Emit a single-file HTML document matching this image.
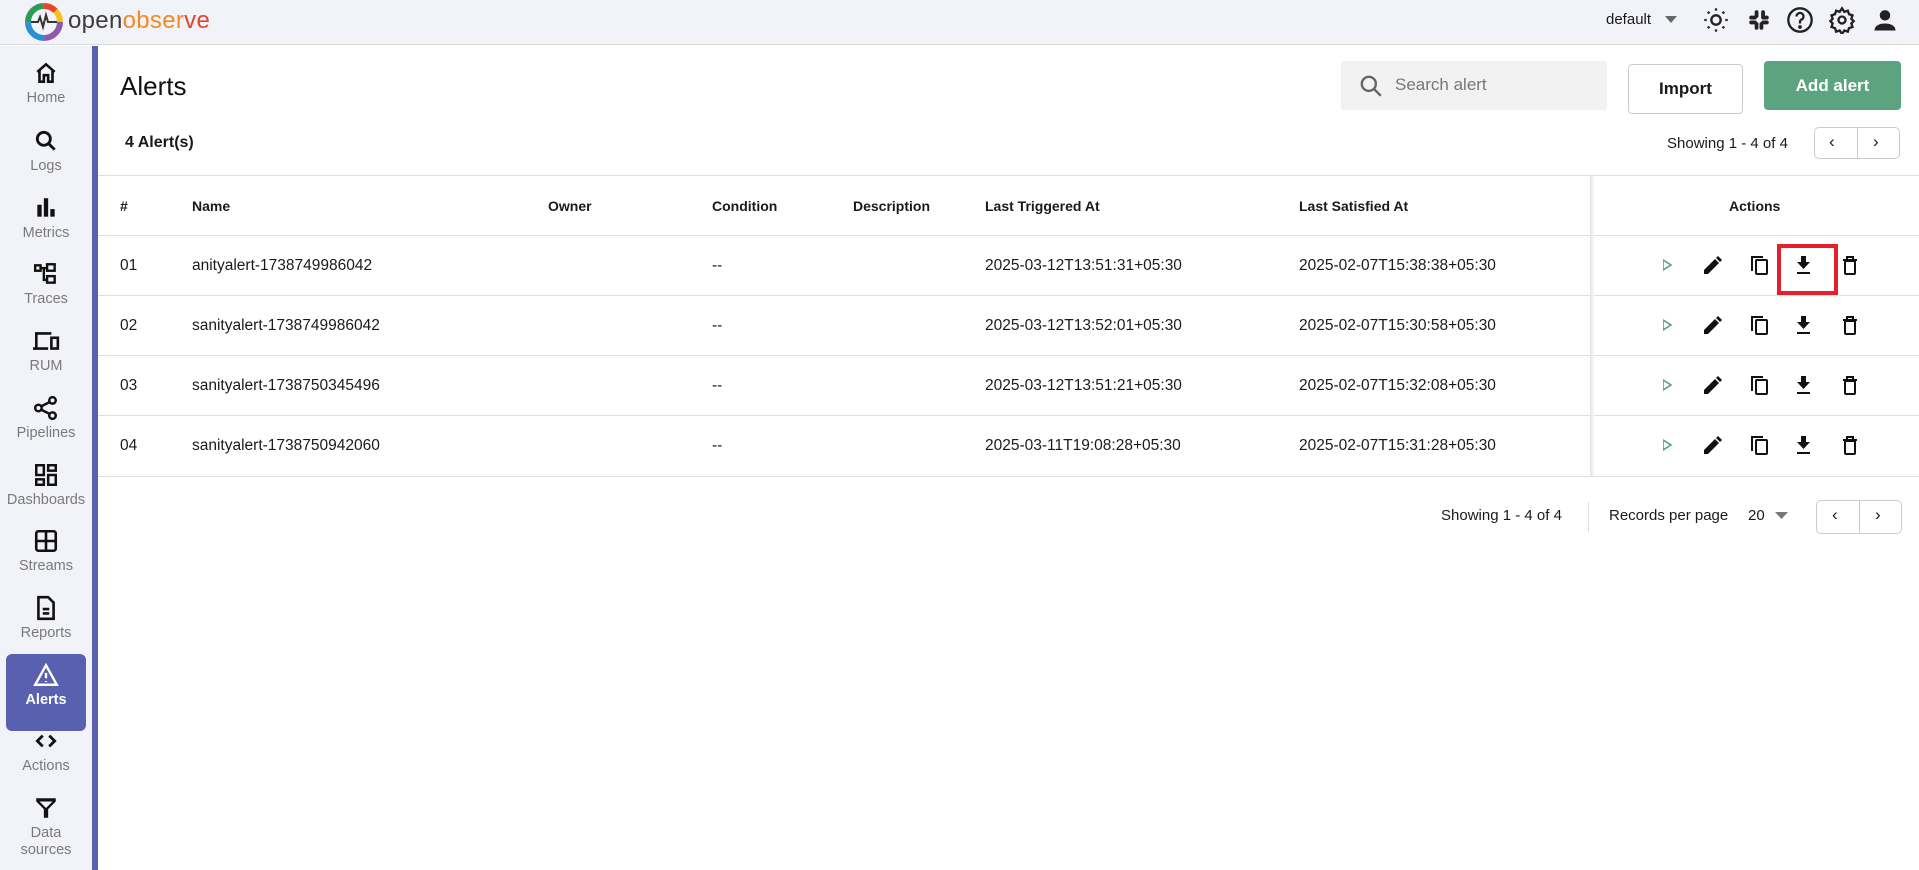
<!DOCTYPE html>
<html><head><meta charset="utf-8"><style>
*{box-sizing:border-box;margin:0;padding:0}
body{width:1919px;height:870px;overflow:hidden;background:#fff;font-family:"Liberation Sans",sans-serif;color:#1a1a1a;position:relative}
.abs{position:absolute}
#hdr{left:0;top:0;width:1919px;height:45px;background:#f2f3f8;border-bottom:1px solid #dcdcdc}
#side{left:0;top:46px;width:92px;height:824px;background:#f2f3f8}
#bar{left:92px;top:46px;width:6px;height:824px;background:#5960b0}
.nav{position:absolute;left:0;width:92px;text-align:center;color:#7a7a7a;font-size:14.5px}
.nav svg{display:block;margin:0 auto}
.nav div{margin-top:4px!important}
.act{left:6px;top:654px;width:80px;height:77px;background:#5960b0;border-radius:6px}
.th{position:absolute;top:198px;font-size:14px;font-weight:bold}
.td{position:absolute;font-size:15.5px}
.hl{position:absolute;left:98px;width:1821px;height:1px;background:#e0e0e0}
</style></head><body>
<div id="hdr" class="abs"></div>
<svg class="abs" style="left:24px;top:2px" width="40" height="40" viewBox="0 0 40 40">
<circle cx="20" cy="20" r="16" fill="none" stroke="#8e5aa8" stroke-width="6" stroke-dasharray="25 76" stroke-dashoffset="0"/>
<circle cx="20" cy="20" r="16" fill="none" stroke="#2b8fd6" stroke-width="6" stroke-dasharray="25 76" stroke-dashoffset="-25"/>
<circle cx="20" cy="20" r="16" fill="none" stroke="#2c9b58" stroke-width="6" stroke-dasharray="25 76" stroke-dashoffset="-50"/>
<circle cx="20" cy="20" r="16" fill="none" stroke="#e8442a" stroke-width="6" stroke-dasharray="13 88" stroke-dashoffset="-75"/>
<circle cx="20" cy="20" r="16" fill="none" stroke="#f4c21c" stroke-width="6" stroke-dasharray="13 88" stroke-dashoffset="-88"/>
<path d="M7 20h7l2-5 3 10 3-12 2 7h9" fill="none" stroke="#333" stroke-width="2"/>
</svg>
<div class="abs" style="left:68px;top:7px;font-size:24px;letter-spacing:0.3px"><span style="color:#3b3b3b">open</span><span style="color:#f08a24">obser</span><span style="color:#e5432b">ve</span></div>
<div class="abs" style="left:1606px;top:11px;font-size:15px">default</div>
<svg class="abs" style="left:1665px;top:16px" width="12" height="8"><path d="M0 0h12L6 7z" fill="#666"/></svg>
<svg class="abs" style="left:1702px;top:6px" width="28" height="28" viewBox="0 0 24 24" fill="none" stroke="#222" stroke-width="2"><circle cx="12" cy="12" r="4"/><path d="M12 2v2M12 20v2M2 12h2M20 12h2M5 5l1.4 1.4M17.6 17.6L19 19M5 19l1.4-1.4M17.6 6.4L19 5"/></svg>
<svg class="abs" style="left:1746px;top:7px" width="26" height="26" viewBox="0 0 24 24" fill="#222"><rect x="8" y="3" width="3.5" height="7" rx="1.7"/><rect x="3" y="8" width="7" height="3.5" rx="1.7"/><rect x="12.5" y="14" width="3.5" height="7" rx="1.7"/><rect x="14" y="12.5" width="7" height="3.5" rx="1.7"/><rect x="14" y="3" width="3.5" height="7" rx="1.7"/><rect x="14" y="8" width="7" height="3.5" rx="1.7"/><rect x="8" y="14" width="3.5" height="7" rx="1.7"/><rect x="3" y="12.5" width="7" height="3.5" rx="1.7"/></svg>
<svg class="abs" style="left:1786px;top:6px" width="28" height="28" viewBox="0 0 24 24" fill="none" stroke="#222" stroke-width="2"><circle cx="12" cy="12" r="10"/><path d="M9 9a3 3 0 1 1 4 2.8c-.7.4-1 1-1 1.7V15"/><circle cx="12" cy="18" r=".6" fill="#222"/></svg>
<svg class="abs" style="left:1828px;top:6px" width="28" height="28" viewBox="0 0 24 24" fill="none" stroke="#222" stroke-width="2"><circle cx="12" cy="12" r="3"/><path d="M12 2l2 3 3-1 1 3 3 1-1 3 2 2-2 2 1 3-3 1-1 3-3-1-2 3-2-3-3 1-1-3-3-1 1-3-2-2 2-2-1-3 3-1 1-3 3 1z"/></svg>
<svg class="abs" style="left:1871px;top:6px" width="28" height="28" viewBox="0 0 24 24" fill="#222"><circle cx="12" cy="8" r="4.5"/><path d="M3 21c0-4 4-6 9-6s9 2 9 6z"/></svg>

<div id="side" class="abs"></div>
<div id="bar" class="abs"></div>
<div class="abs act"></div>
<div class="nav" style="top:60px"><svg width="26" height="26" viewBox="0 0 24 24" fill="none" stroke="#111" stroke-width="2.4"><path d="M4 11l8-7 8 7M6 9v11h4v-6h4v6h4V9"/></svg><div>Home</div></div>
<div class="nav" style="top:128px"><svg width="26" height="26" viewBox="0 0 24 24" fill="none" stroke="#111" stroke-width="2.6"><circle cx="10" cy="10" r="6"/><path d="M14.5 14.5L20 20"/></svg><div>Logs</div></div>
<div class="nav" style="top:195px"><svg width="26" height="26" viewBox="0 0 24 24" fill="#111"><rect x="4" y="9" width="4" height="11"/><rect x="10" y="3" width="4" height="17"/><rect x="16" y="13" width="4" height="7"/></svg><div>Metrics</div></div>
<div class="nav" style="top:261px"><svg width="26" height="26" viewBox="0 0 24 24" fill="none" stroke="#111" stroke-width="2.2"><rect x="2" y="4" width="5" height="5"/><rect x="13" y="3" width="7" height="6"/><rect x="13" y="14" width="7" height="6"/><path d="M7 6.5h6M10 6.5v11h3"/></svg><div>Traces</div></div>
<div class="nav" style="top:328px"><svg width="28" height="26" viewBox="0 0 26 24" fill="none" stroke="#111" stroke-width="2.4"><path d="M4 18V5h14M1 19h14"/><rect x="18" y="9" width="6" height="10"/></svg><div>RUM</div></div>
<div class="nav" style="top:395px"><svg width="26" height="26" viewBox="0 0 24 24" fill="none" stroke="#111" stroke-width="2.3"><circle cx="5" cy="12" r="3"/><circle cx="18" cy="5" r="3"/><circle cx="18" cy="19" r="3"/><path d="M7.5 10.5l8-4M7.5 13.5l8 4"/></svg><div>Pipelines</div></div>
<div class="nav" style="top:462px"><svg width="26" height="26" viewBox="0 0 24 24" fill="none" stroke="#111" stroke-width="2.3"><rect x="3" y="3" width="7" height="9"/><rect x="14" y="3" width="7" height="5"/><rect x="3" y="16" width="7" height="5"/><rect x="14" y="12" width="7" height="9"/></svg><div>Dashboards</div></div>
<div class="nav" style="top:528px"><svg width="26" height="26" viewBox="0 0 24 24" fill="none" stroke="#111" stroke-width="2.4"><rect x="3" y="3" width="18" height="18" rx="2"/><path d="M12 3v18M3 12h18"/></svg><div>Streams</div></div>
<div class="nav" style="top:595px"><svg width="26" height="26" viewBox="0 0 24 24" fill="none" stroke="#111" stroke-width="2.4"><path d="M5 2h9l5 5v15H5z"/><path d="M9 13h6M9 17h6"/></svg><div>Reports</div></div>
<div class="nav" style="top:662px;color:#fff;font-weight:bold"><svg width="26" height="26" viewBox="0 0 24 24" fill="none" stroke="#fff" stroke-width="2.2"><path d="M12 3L2 21h20z"/><path d="M12 10v5M12 17.5v1"/></svg><div>Alerts</div></div>
<div class="nav" style="top:728px"><svg width="26" height="26" viewBox="0 0 24 24" fill="none" stroke="#111" stroke-width="2.6"><path d="M9 7l-5 5 5 5M15 7l5 5-5 5"/></svg><div>Actions</div></div>
<div class="nav" style="top:795px;line-height:17px"><svg width="26" height="26" viewBox="0 0 24 24" fill="#111"><path d="M3 3h18v3l-7 7v8h-4v-8L3 6z M6 6l6 6 6-6z" fill-rule="evenodd"/></svg><div>Data<br>sources</div></div>

<div class="abs" style="left:120px;top:71px;font-size:26px;color:#111">Alerts</div>
<div class="abs" style="left:1341px;top:61px;width:266px;height:49px;background:#f2f2f2;border-radius:3px"></div>
<svg class="abs" style="left:1358px;top:73px" width="26" height="26" viewBox="0 0 24 24" fill="none" stroke="#666" stroke-width="2.2"><circle cx="10" cy="10" r="6.5"/><path d="M15 15l6 6"/></svg>
<div class="abs" style="left:1395px;top:75px;font-size:17px;color:#777">Search alert</div>
<div class="abs" style="left:1628px;top:64px;width:115px;height:50px;border:1px solid #ccc;border-radius:4px;text-align:center;line-height:48px;font-weight:bold;font-size:17px">Import</div>
<div class="abs" style="left:1764px;top:61px;width:137px;height:49px;background:#5ba47f;border-radius:4px;text-align:center;line-height:49px;font-weight:bold;font-size:17px;color:#fff">Add alert</div>
<div class="abs" style="left:125px;top:134px;font-size:16px;font-weight:bold">4 Alert(s)</div>
<div class="abs" style="left:1667px;top:135px;font-size:15px">Showing 1 - 4 of 4</div>
<div class="abs" style="left:1814px;top:127px;width:86px;height:32px;border:1px solid #ccc;border-radius:5px"></div>
<div class="abs" style="left:1857px;top:127px;width:1px;height:32px;background:#ccc"></div>
<div class="abs" style="left:1829px;top:132px;font-size:17px">‹</div><div class="abs" style="left:1873px;top:132px;font-size:17px">›</div>

<div class="hl" style="top:175px"></div>
<div class="hl" style="top:235px"></div>
<div class="hl" style="top:295px"></div>
<div class="hl" style="top:355px"></div>
<div class="hl" style="top:415px"></div>
<div class="hl" style="top:476px"></div>
<div class="abs" style="left:1590px;top:176px;width:4px;height:300px;background:linear-gradient(90deg,#e4e4e4,#f8f8f8)"></div>

<div class="th" style="left:120px">#</div>
<div class="th" style="left:192px">Name</div>
<div class="th" style="left:548px">Owner</div>
<div class="th" style="left:712px">Condition</div>
<div class="th" style="left:853px">Description</div>
<div class="th" style="left:985px">Last Triggered At</div>
<div class="th" style="left:1299px">Last Satisfied At</div>
<div class="th" style="left:1729px">Actions</div>

<div class="td" style="left:120px;top:257px">01</div><div class="td" style="left:192px;top:257px">anityalert-1738749986042</div><div class="td" style="left:712px;top:257px">--</div><div class="td" style="left:985px;top:257px">2025-03-12T13:51:31+05:30</div><div class="td" style="left:1299px;top:257px">2025-02-07T15:38:38+05:30</div>
<div class="td" style="left:120px;top:317px">02</div><div class="td" style="left:192px;top:317px">sanityalert-1738749986042</div><div class="td" style="left:712px;top:317px">--</div><div class="td" style="left:985px;top:317px">2025-03-12T13:52:01+05:30</div><div class="td" style="left:1299px;top:317px">2025-02-07T15:30:58+05:30</div>
<div class="td" style="left:120px;top:377px">03</div><div class="td" style="left:192px;top:377px">sanityalert-1738750345496</div><div class="td" style="left:712px;top:377px">--</div><div class="td" style="left:985px;top:377px">2025-03-12T13:51:21+05:30</div><div class="td" style="left:1299px;top:377px">2025-02-07T15:32:08+05:30</div>
<div class="td" style="left:120px;top:437px">04</div><div class="td" style="left:192px;top:437px">sanityalert-1738750942060</div><div class="td" style="left:712px;top:437px">--</div><div class="td" style="left:985px;top:437px">2025-03-11T19:08:28+05:30</div><div class="td" style="left:1299px;top:437px">2025-02-07T15:31:28+05:30</div>

<svg width="0" height="0" style="position:absolute"><defs>
<g id="acts">
<path d="M0 -5v10l8-5z" fill="none" stroke="#5ba47f" stroke-width="1.6"/>
<path d="M41 9v-4l11-11 4 4-11 11z M53 -7l2-2 4 4-2 2z" fill="#111"/>
<g fill="none" stroke="#111" stroke-width="2"><path d="M89 6V-8h11"/><rect x="93" y="-5" width="11" height="14" rx="1"/></g>
<path d="M138 -9h5v6h4l-6.5 7-6.5-7h4z M134 7h13v2h-13z" fill="#111"/>
<g fill="none" stroke="#111" stroke-width="2"><rect x="182" y="-4" width="10" height="13" rx="1"/><path d="M180 -5h14M184 -5v-3h6v3"/></g>
</g></defs></svg>
<svg class="abs" style="left:1663px;top:245px" width="220" height="220"><use href="#acts" y="20"/><use href="#acts" y="80"/><use href="#acts" y="140"/><use href="#acts" y="200"/></svg>
<div class="abs" style="left:1777px;top:244px;width:61px;height:51px;border:4px solid #e4202a"></div>

<div class="abs" style="left:1441px;top:507px;font-size:15px">Showing 1 - 4 of 4</div>
<div class="abs" style="left:1588px;top:502px;width:1px;height:30px;background:#ddd"></div>
<div class="abs" style="left:1609px;top:507px;font-size:15px">Records per page</div>
<div class="abs" style="left:1748px;top:507px;font-size:15px">20</div>
<svg class="abs" style="left:1775px;top:512px" width="13" height="8"><path d="M0 0h13L6.5 7z" fill="#777"/></svg>
<div class="abs" style="left:1816px;top:500px;width:86px;height:34px;border:1px solid #ccc;border-radius:5px"></div>
<div class="abs" style="left:1859px;top:500px;width:1px;height:34px;background:#ccc"></div>
<div class="abs" style="left:1832px;top:505px;font-size:17px">‹</div><div class="abs" style="left:1875px;top:505px;font-size:17px">›</div>
</body></html>
